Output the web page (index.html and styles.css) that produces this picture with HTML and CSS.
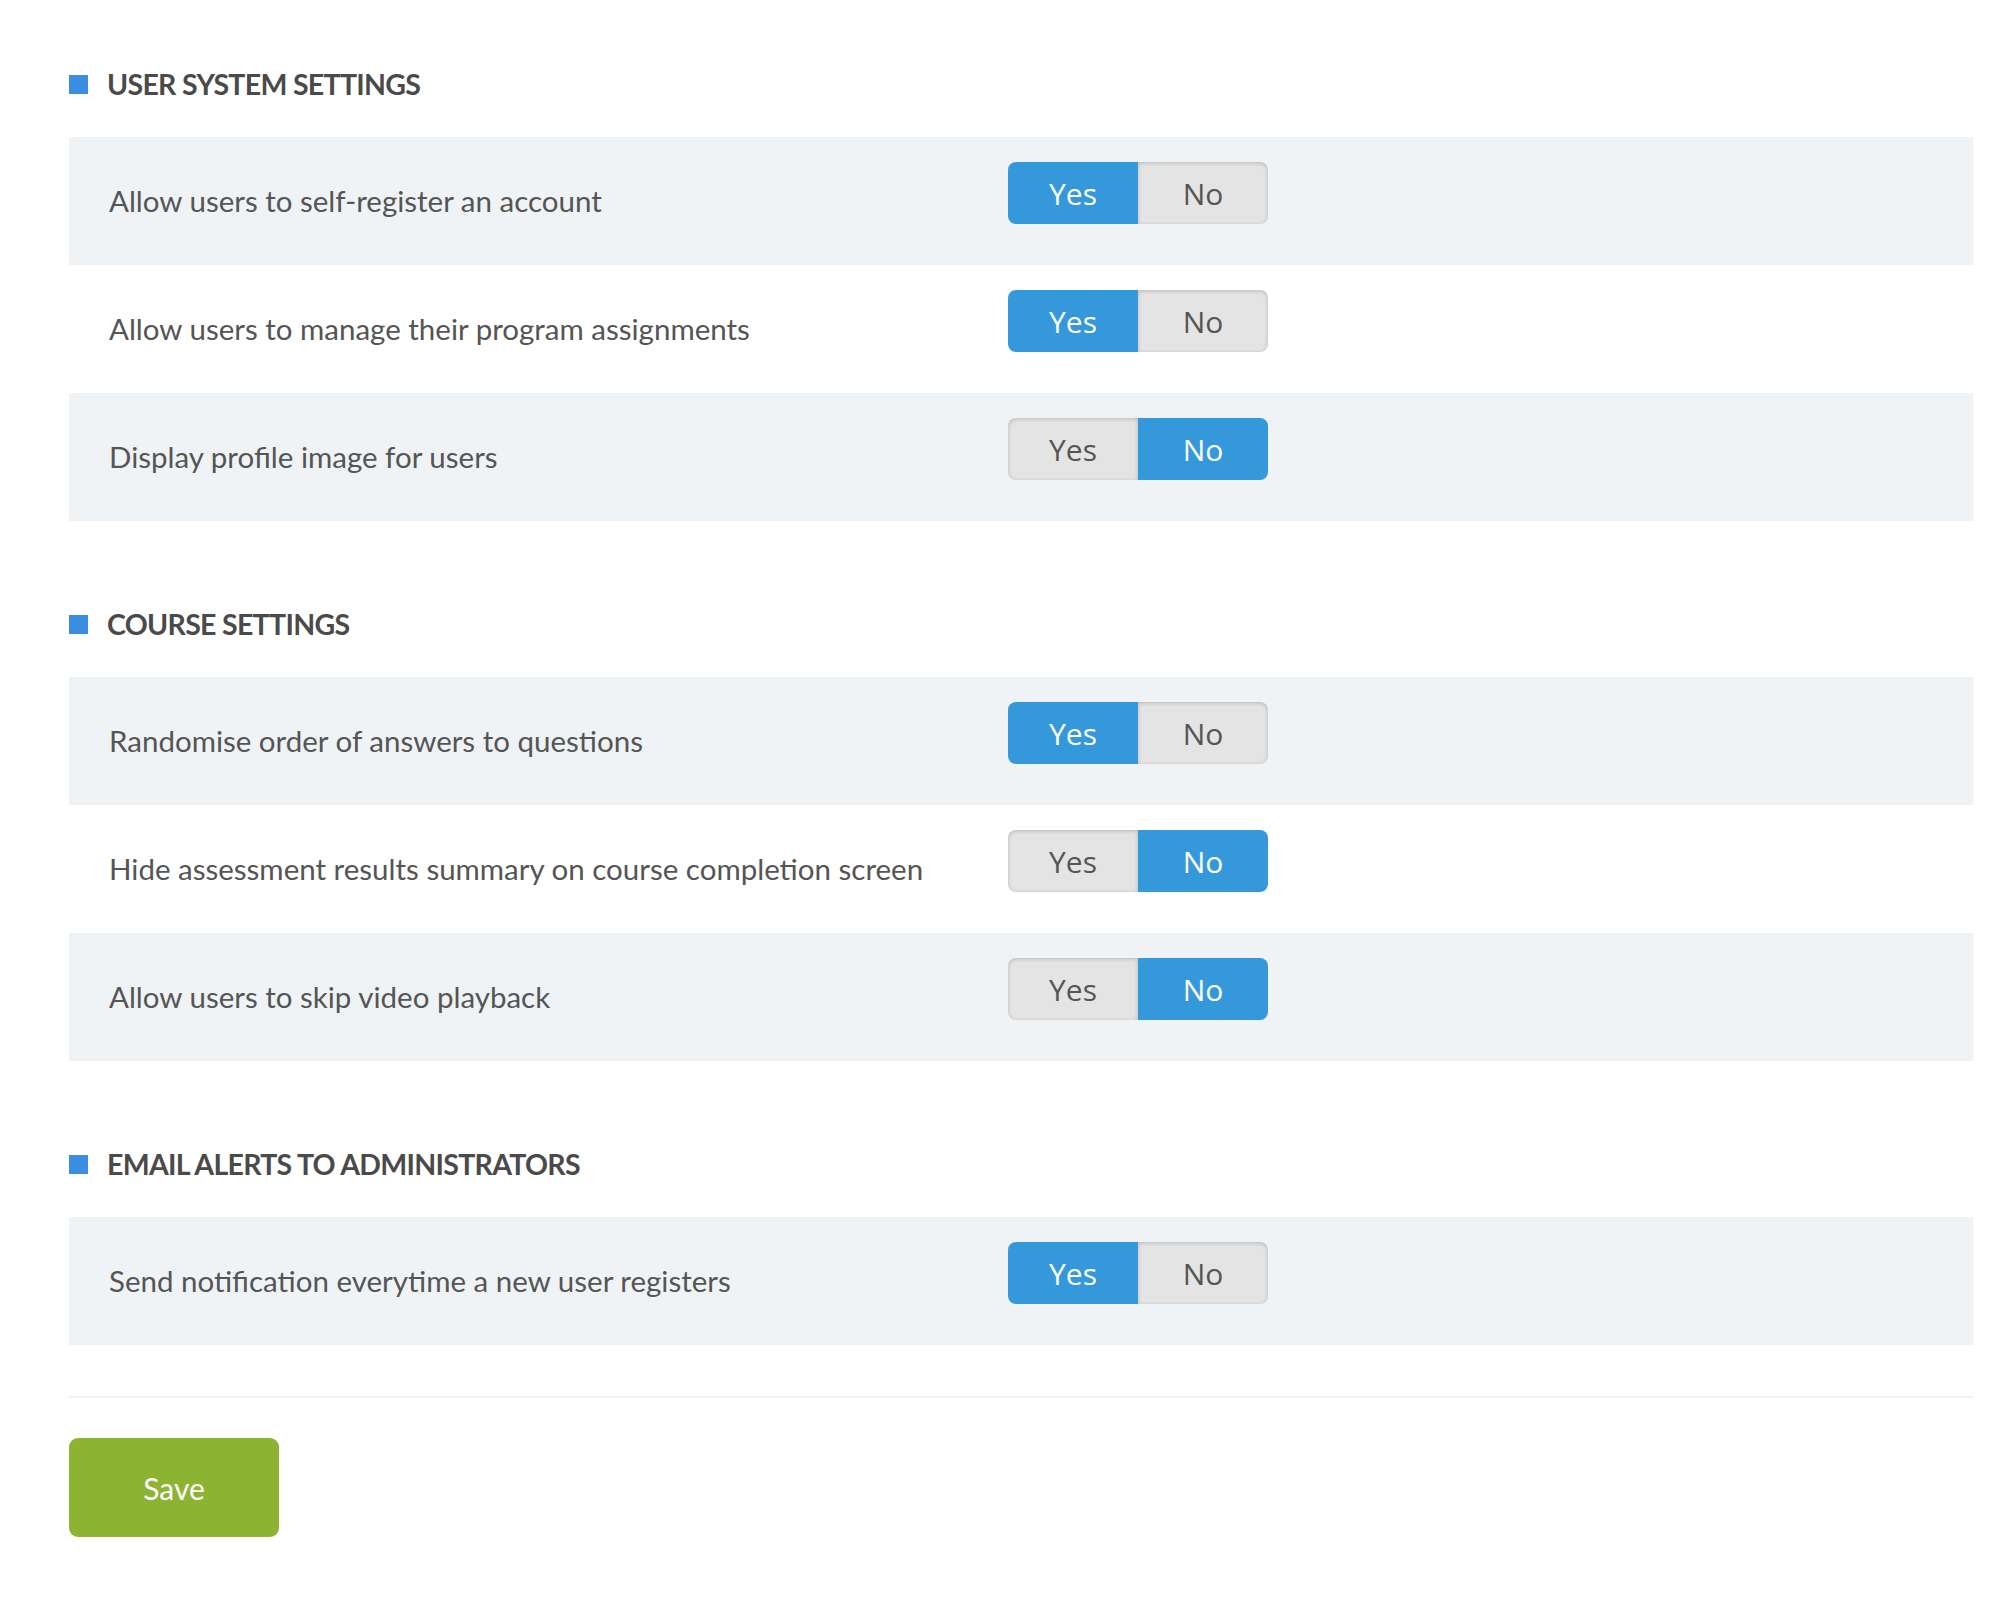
FILE: index.html
```html
<!DOCTYPE html>
<html lang="en">
<head>
<meta charset="utf-8">
<title>Settings</title>
<link rel="stylesheet" href="styles.css">
</head>
<body>
<div class="page">
  <section class="section">
    <h2 class="section-title"><span class="marker"></span>USER SYSTEM SETTINGS</h2>
    <div class="rows">
      <div class="row">
        <div class="label">Allow users to self-register an account</div>
        <div class="toggle"><span class="opt active">Yes</span><span class="opt">No</span></div>
      </div>
      <div class="row">
        <div class="label">Allow users to manage their program assignments</div>
        <div class="toggle"><span class="opt active">Yes</span><span class="opt">No</span></div>
      </div>
      <div class="row">
        <div class="label">Display profile image for users</div>
        <div class="toggle"><span class="opt">Yes</span><span class="opt active">No</span></div>
      </div>
    </div>
  </section>

  <section class="section">
    <h2 class="section-title"><span class="marker"></span>COURSE SETTINGS</h2>
    <div class="rows">
      <div class="row">
        <div class="label">Randomise order of answers to questions</div>
        <div class="toggle"><span class="opt active">Yes</span><span class="opt">No</span></div>
      </div>
      <div class="row">
        <div class="label">Hide assessment results summary on course completion screen</div>
        <div class="toggle"><span class="opt">Yes</span><span class="opt active">No</span></div>
      </div>
      <div class="row">
        <div class="label">Allow users to skip video playback</div>
        <div class="toggle"><span class="opt">Yes</span><span class="opt active">No</span></div>
      </div>
    </div>
  </section>

  <section class="section">
    <h2 class="section-title"><span class="marker"></span>EMAIL ALERTS TO ADMINISTRATORS</h2>
    <div class="rows">
      <div class="row">
        <div class="label">Send notification everytime a new user registers</div>
        <div class="toggle"><span class="opt active">Yes</span><span class="opt">No</span></div>
      </div>
    </div>
  </section>

  <div class="actions">
    <button class="save" type="button">Save</button>
  </div>
</div>
</body>
</html>
```

FILE: styles.css
```css
* { box-sizing: border-box; }

html, body {
  margin: 0;
  padding: 0;
  background: #ffffff;
}

body {
  font-family: Lato, "Noto Sans", sans-serif;
  color: #555555;
}

.page {
  padding: 64px 39px 40px 69px;
}

.section + .section {
  margin-top: 83px;
}

.section-title {
  display: flex;
  align-items: center;
  margin: 0 0 33px 0;
  height: 40px;
  font-family: Lato, sans-serif;
  font-weight: 700;
  font-size: 28.5px;
  line-height: 40px;
  color: #4a4a4a;
  letter-spacing: -0.7px;
}

.marker {
  display: inline-block;
  width: 19px;
  height: 19px;
  background: #3a8ee0;
  margin-right: 19px;
  flex: 0 0 auto;
}

.row {
  display: flex;
  align-items: center;
  height: 128px;
  padding-left: 40px;
}

.row:nth-child(odd) {
  background: #eff3f6;
}

.label {
  flex: 0 0 899px;
  font-size: 29.5px;
  line-height: 36px;
  padding-bottom: 1px;
  color: #555555;
}

.toggle {
  display: flex;
  width: 260px;
  height: 62px;
  margin-bottom: 16px;
  border-radius: 8px;
}

.opt {
  flex: 1 1 0;
  display: flex;
  align-items: center;
  justify-content: center;
  font-family: "Open Sans", sans-serif;
  font-size: 30px;
  color: #555555;
  background: #e4e4e4;
  box-shadow: inset 0 1px 4px rgba(0, 0, 0, 0.2);
}

.opt:first-child {
  border-radius: 8px 0 0 8px;
}

.opt:last-child {
  border-radius: 0 8px 8px 0;
}

.opt.active {
  background: #3498db;
  color: #ffffff;
  font-weight: 500;
  box-shadow: none;
}

.actions {
  margin-top: 51px;
  border-top: 2px solid #f2f2f2;
  padding-top: 40px;
}

.save {
  width: 210px;
  height: 99px;
  border: none;
  border-radius: 9px;
  background: #8cb332;
  color: #ffffff;
  font-family: Lato, sans-serif;
  font-size: 30px;
  cursor: pointer;
}
```
